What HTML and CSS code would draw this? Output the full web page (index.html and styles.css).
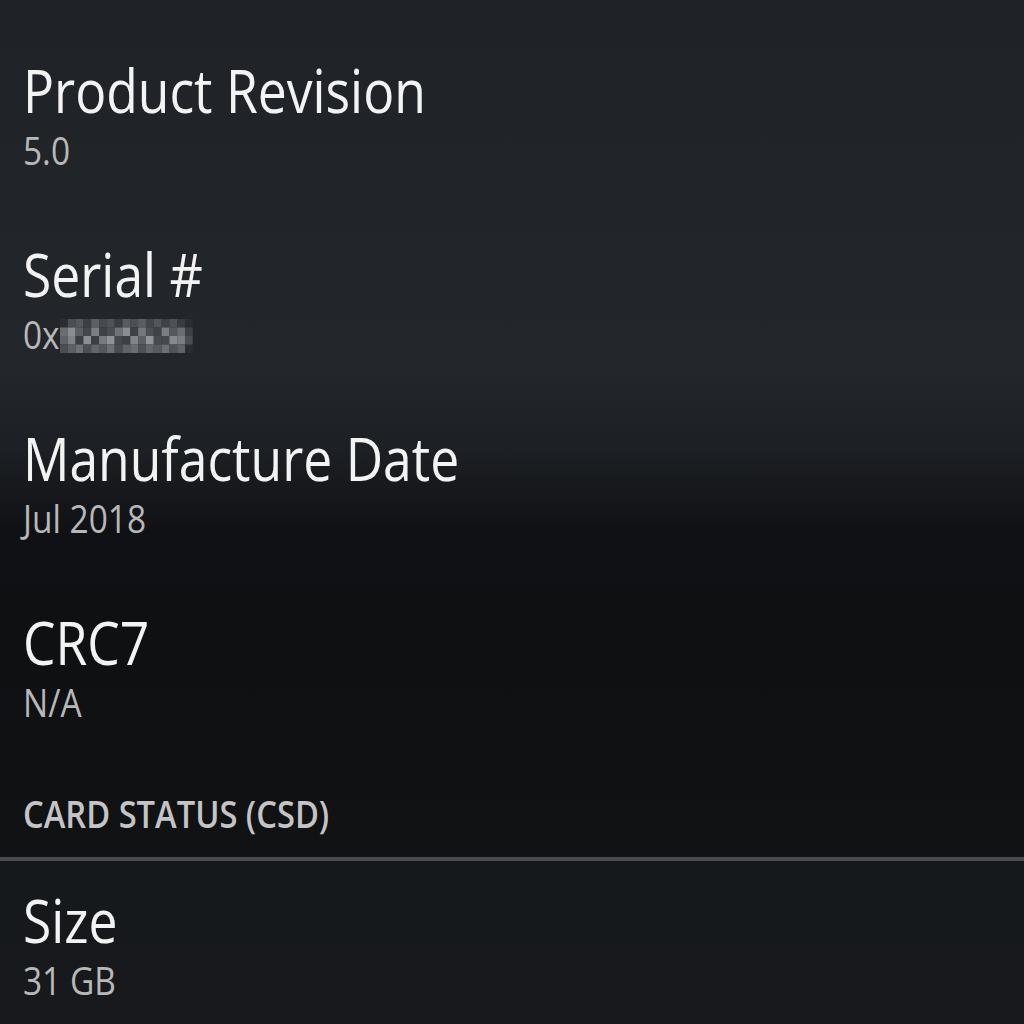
FILE: index.html
```html
<!DOCTYPE html>
<html lang="en">
<head>
    <meta charset="UTF-8">
    <meta name="viewport" content="width=device-width, initial-scale=1.0">
    <title>Card Info</title>
    <link rel="stylesheet" href="styles.css">
</head>
<body>
    <div class="list">
        <div class="item">
            <div class="title">Product Revision</div>
            <div class="value">5.0</div>
        </div>

        <div class="item">
            <div class="title">Serial #</div>
            <div class="value">0x<svg class="mosaic" width="151" height="34" viewBox="0 0 17 4" preserveAspectRatio="none">
                <rect x="0" y="0" width="17" height="4" fill="#2a2d31"/>
                <rect x="1" y="0" width="1" height="1" fill="#4a4d51"/>
                <rect x="2" y="0" width="1" height="1" fill="#55585c"/>
                <rect x="3" y="0" width="1" height="1" fill="#3c3f43"/>
                <rect x="4" y="0" width="1" height="1" fill="#5c5f63"/>
                <rect x="5" y="0" width="1" height="1" fill="#46494d"/>
                <rect x="6" y="0" width="1" height="1" fill="#4f5256"/>
                <rect x="7" y="0" width="1" height="1" fill="#3a3d41"/>
                <rect x="8" y="0" width="1" height="1" fill="#585b5f"/>
                <rect x="9" y="0" width="1" height="1" fill="#4c4f53"/>
                <rect x="10" y="0" width="1" height="1" fill="#5a5d61"/>
                <rect x="11" y="0" width="1" height="1" fill="#43464a"/>
                <rect x="12" y="0" width="1" height="1" fill="#52555a"/>
                <rect x="13" y="0" width="1" height="1" fill="#3e4145"/>
                <rect x="14" y="0" width="1" height="1" fill="#4e5155"/>
                <rect x="15" y="0" width="1" height="1" fill="#383b3f"/>
                <rect x="0" y="1" width="1" height="1" fill="#6a6d71"/>
                <rect x="1" y="1" width="1" height="1" fill="#8a8d90"/>
                <rect x="2" y="1" width="1" height="1" fill="#5b5e62"/>
                <rect x="3" y="1" width="1" height="1" fill="#45484c"/>
                <rect x="4" y="1" width="1" height="1" fill="#7c7f83"/>
                <rect x="5" y="1" width="1" height="1" fill="#3f4246"/>
                <rect x="6" y="1" width="1" height="1" fill="#4a4d51"/>
                <rect x="7" y="1" width="1" height="1" fill="#6f7276"/>
                <rect x="8" y="1" width="1" height="1" fill="#8a8d91"/>
                <rect x="9" y="1" width="1" height="1" fill="#3e4145"/>
                <rect x="10" y="1" width="1" height="1" fill="#75787c"/>
                <rect x="11" y="1" width="1" height="1" fill="#4c4f53"/>
                <rect x="12" y="1" width="1" height="1" fill="#3f4246"/>
                <rect x="13" y="1" width="1" height="1" fill="#7a7d81"/>
                <rect x="14" y="1" width="1" height="1" fill="#55585c"/>
                <rect x="15" y="1" width="1" height="1" fill="#6a6d71"/>
                <rect x="16" y="1" width="1" height="1" fill="#3d4044"/>
                <rect x="0" y="2" width="1" height="1" fill="#5f6266"/>
                <rect x="1" y="2" width="1" height="1" fill="#7e8185"/>
                <rect x="2" y="2" width="1" height="1" fill="#3a3d41"/>
                <rect x="3" y="2" width="1" height="1" fill="#8b8e92"/>
                <rect x="4" y="2" width="1" height="1" fill="#3c3f43"/>
                <rect x="5" y="2" width="1" height="1" fill="#777a7e"/>
                <rect x="6" y="2" width="1" height="1" fill="#909396"/>
                <rect x="7" y="2" width="1" height="1" fill="#45484c"/>
                <rect x="8" y="2" width="1" height="1" fill="#3c3f43"/>
                <rect x="9" y="2" width="1" height="1" fill="#838689"/>
                <rect x="10" y="2" width="1" height="1" fill="#5c5f63"/>
                <rect x="11" y="2" width="1" height="1" fill="#929598"/>
                <rect x="12" y="2" width="1" height="1" fill="#484b4f"/>
                <rect x="13" y="2" width="1" height="1" fill="#46494d"/>
                <rect x="14" y="2" width="1" height="1" fill="#86898d"/>
                <rect x="15" y="2" width="1" height="1" fill="#7a7d81"/>
                <rect x="16" y="2" width="1" height="1" fill="#4a4d51"/>
                <rect x="0" y="3" width="1" height="1" fill="#4a4d51"/>
                <rect x="1" y="3" width="1" height="1" fill="#5d6064"/>
                <rect x="2" y="3" width="1" height="1" fill="#6e7175"/>
                <rect x="3" y="3" width="1" height="1" fill="#4c4f53"/>
                <rect x="4" y="3" width="1" height="1" fill="#62656a"/>
                <rect x="5" y="3" width="1" height="1" fill="#55585c"/>
                <rect x="6" y="3" width="1" height="1" fill="#6b6e72"/>
                <rect x="7" y="3" width="1" height="1" fill="#484b4f"/>
                <rect x="8" y="3" width="1" height="1" fill="#5f6266"/>
                <rect x="9" y="3" width="1" height="1" fill="#6a6d71"/>
                <rect x="10" y="3" width="1" height="1" fill="#4e5155"/>
                <rect x="11" y="3" width="1" height="1" fill="#63666a"/>
                <rect x="12" y="3" width="1" height="1" fill="#575a5e"/>
                <rect x="13" y="3" width="1" height="1" fill="#6c6f73"/>
                <rect x="14" y="3" width="1" height="1" fill="#505357"/>
                <rect x="15" y="3" width="1" height="1" fill="#606367"/>
            </svg></div>
        </div>

        <div class="item">
            <div class="title">Manufacture Date</div>
            <div class="value">Jul 2018</div>
        </div>

        <div class="item">
            <div class="title">CRC7</div>
            <div class="value">N/A</div>
        </div>
    </div>

    <!-- Section: card status -->
    <div class="section-header">CARD STATUS (CSD)</div>
    <div class="divider"></div>

    <div class="list">
        <div class="item">
            <div class="title">Size</div>
            <div class="value">31 GB</div>
        </div>
    </div>
</body>
</html>
```

FILE: styles.css
```css
html, body {
    height: 100%;
}

body {
    margin: 0;
    font-family: "Open Sans", "Noto Sans", sans-serif;
    color: #f2f2f2;
    background: linear-gradient(180deg,
        #1f2227 0%,
        #23272b 36%,
        #1c1f23 44%,
        #101114 52%,
        #0f1012 62%,
        #111214 83.5%,
        #16191c 84%,
        #17191c 100%);
    overflow: hidden;
}

/* List of info rows */
.list {
    display: flex;
    flex-direction: column;
    gap: 74px;
    padding: 60px 0 0 23px;
}

.item {
    display: flex;
    flex-direction: column;
    gap: 10px;
}

/* the device font is narrower than Open Sans, squeeze it a bit */
.title {
    font-size: 60px;
    line-height: 60px;
    color: #f3f3f3;
    transform: scaleX(0.86);
    transform-origin: left center;
}

.value {
    display: flex;
    align-items: center;
    font-size: 38px;
    line-height: 40px;
    color: #b8b8b8;
    transform: scaleX(0.88);
    transform-origin: left center;
}

.mosaic {
    margin-top: 4px;
}

/* Section header */
.section-header {
    margin: 71px 0 0 23px;
    font-size: 38px;
    line-height: 40px;
    font-weight: 600;
    color: #c4c4c4;
    transform: scaleX(0.86);
    transform-origin: left center;
}

.divider {
    margin-top: 24px;
    height: 4px;
    background: #4a4d50;
}

.divider + .list {
    padding-top: 29px;
}
```
